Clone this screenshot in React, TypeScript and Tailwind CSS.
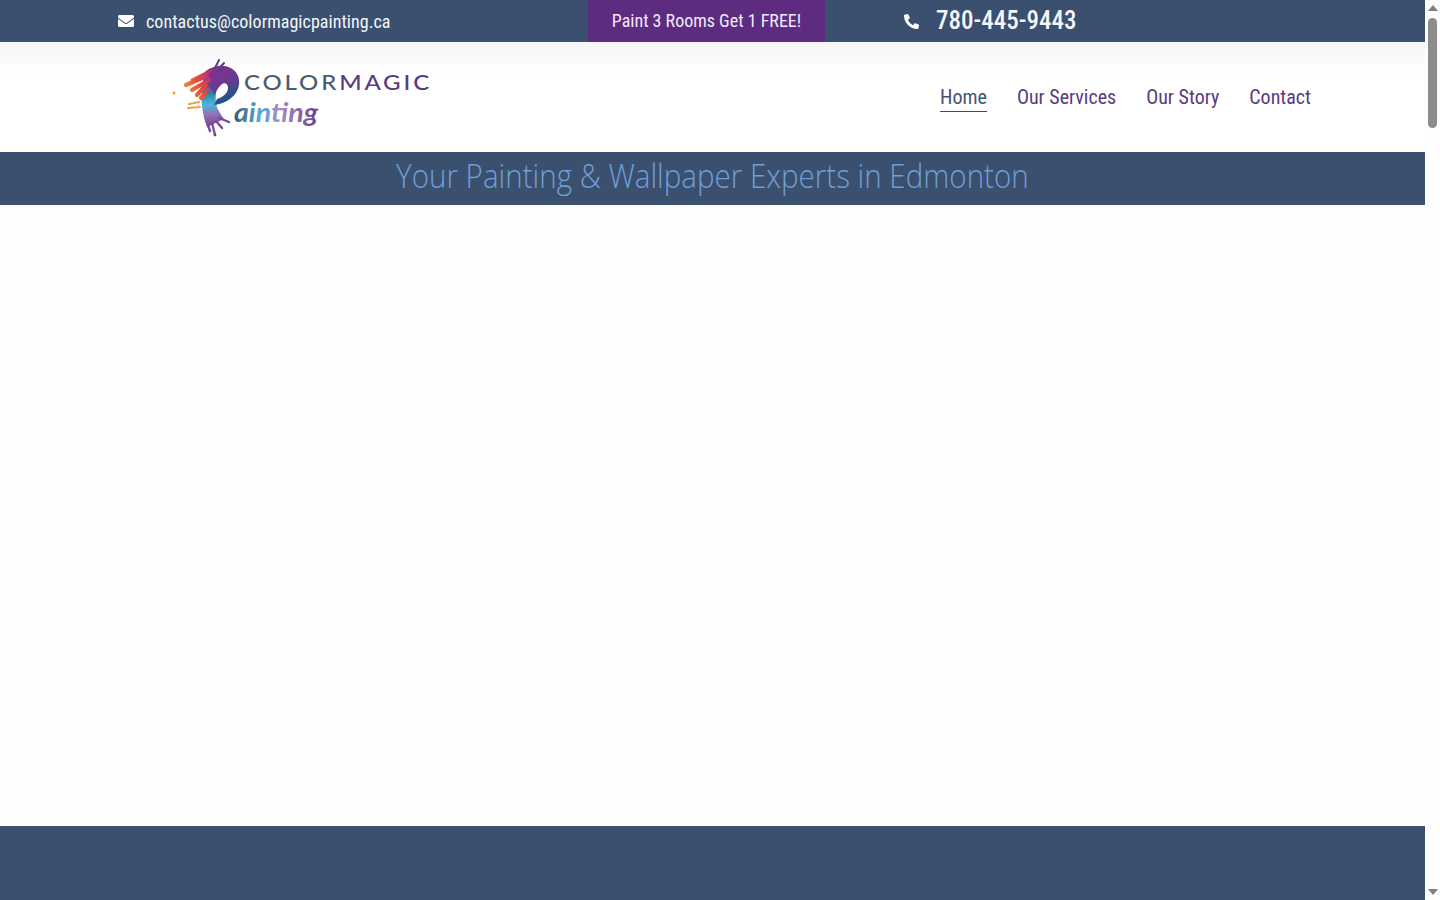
import { FaEnvelope, FaPhoneAlt } from "react-icons/fa";

function Logo() {
  return (
    <svg width="262" height="84" viewBox="170 55 262 84" className="block">
      <defs>
        <linearGradient id="bowl" gradientUnits="userSpaceOnUse" x1="208" y1="68" x2="226" y2="105">
          <stop offset="0" stopColor="#8a2f90" />
          <stop offset="0.5" stopColor="#6a3a90" />
          <stop offset="1" stopColor="#0f5a86" />
        </linearGradient>
        <linearGradient id="stem" gradientUnits="userSpaceOnUse" x1="208" y1="76" x2="212" y2="128">
          <stop offset="0" stopColor="#54408f" />
          <stop offset="0.3" stopColor="#1f7fa8" />
          <stop offset="0.55" stopColor="#4fb3da" />
          <stop offset="0.75" stopColor="#9570b0" />
          <stop offset="1" stopColor="#6b3f8e" />
        </linearGradient>
        <linearGradient id="streak" gradientUnits="userSpaceOnUse" x1="178" y1="90" x2="212" y2="74">
          <stop offset="0" stopColor="#f5a623" />
          <stop offset="0.55" stopColor="#e8503a" />
          <stop offset="1" stopColor="#b52a82" />
        </linearGradient>
        <linearGradient id="word" gradientUnits="userSpaceOnUse" x1="234" y1="0" x2="318" y2="0">
          <stop offset="0" stopColor="#3f5676" />
          <stop offset="0.3" stopColor="#55a9d3" />
          <stop offset="0.55" stopColor="#a98bc4" />
          <stop offset="1" stopColor="#69408f" />
        </linearGradient>
      </defs>
      {/* brush P */}
      <path d="M205 74 L219 78 C216 86 215 96 216 103 C217 110 221 114 224 119 L207 127 C202 114 201 100 202 92 C202 86 203 79 205 74 Z" fill="url(#stem)" />
      <path d="M205 72 C214 63 233 63 238 76 C243 89 232 103 214 105 L217 99 C223 97 228 93 228 88 C228 83 224 82 221 85 C218 88 216 91 215 95 L208 84 Z" fill="url(#bowl)" />
      <path d="M208 125 L210 131 M212 123 L215 135 M216 121 L222 128 M219 118 L229 122" stroke="#7a4a9c" strokeWidth="2.4" strokeLinecap="round" />
      <circle cx="215" cy="135" r="1.3" fill="#6b3f8e" />
      <path d="M207 76 L186 85 M209 80 L192 90 M206 85 L197 95 M208 90 L201 98" stroke="url(#streak)" strokeWidth="4.2" strokeLinecap="round" />
      <path d="M210 71 L192 80" stroke="url(#streak)" strokeWidth="3" strokeLinecap="round" />
      <circle cx="174" cy="93" r="1.5" fill="#f5a623" />
      <path d="M189 104 L199 102 M188 108 L200 107" stroke="#eda24a" strokeWidth="2.2" strokeLinecap="round" />
      <path d="M214 70 L219 60 M217 71 L224 63 M220 71 L224 67" stroke="#5d3a84" strokeWidth="2" strokeLinecap="round" />
      {/* wordmark */}
      <text x="244" y="90" textLength="188" lengthAdjust="spacingAndGlyphs" letterSpacing="2.5" fontFamily="Lato, sans-serif" fontSize="21" fontWeight="500">
        <tspan fill="#4b5c72">COLOR</tspan>
        <tspan fill="#5b3b80">MAGIC</tspan>
      </text>
      <text x="234" y="122" textLength="84" lengthAdjust="spacingAndGlyphs" fontFamily="Lato, sans-serif" fontStyle="italic" fontWeight="700" fontSize="26" fill="url(#word)">
        ainting
      </text>
    </svg>
  );
}

function Scrollbar() {
  return (
    <aside className="w-[15px] h-screen flex flex-col items-center bg-[#fdfdfd] shrink-0">
      <div className="mt-[5px] w-0 h-0 border-x-[5px] border-x-transparent border-b-[6px] border-b-[#7f7f7f]" />
      <div className="mt-[7px] w-[9px] h-[110px] rounded-full bg-[#8c8c8c]" />
      <div className="mt-auto mb-[5px] w-0 h-0 border-x-[5px] border-x-transparent border-t-[6px] border-t-[#7f7f7f]" />
    </aside>
  );
}

export default function App() {
  const condensed = "font-['Roboto'] [font-stretch:75%]";
  return (
    <div className="flex h-screen overflow-hidden bg-[#fdfdfd] font-['Roboto',sans-serif]">
      <main className="flex-1 flex flex-col min-w-0">
        <div className="h-[42px] bg-[#3b4f6f] flex items-center text-[#f4f6fa] shrink-0">
          <div className="w-[588px] pl-[118px] flex items-center">
            <FaEnvelope className="w-4 h-4 text-white" />
            <span className={`${condensed} ml-3 text-[18px] tracking-[0.05px]`}>contactus@colormagicpainting.ca</span>
          </div>
          <div className={`${condensed} w-[237px] h-full bg-[#5d2c80] flex items-center justify-center text-[18px] text-[#f3e9f8] pb-[2px]`}>
            Paint 3 Rooms Get 1 FREE!
          </div>
          <div className="pl-[79px] flex items-center">
            <FaPhoneAlt className="w-[15px] h-[15px] text-white" />
            <span className={`${condensed} ml-[17px] text-[25px] font-medium`}>780-445-9443</span>
          </div>
        </div>

        <header className="h-[110px] shrink-0 flex items-center justify-between pl-[170px] pr-[114px] bg-gradient-to-b from-[#f6f6f6] via-white via-30% to-white">
          <Logo />
          <nav className={`${condensed} flex gap-[30px] text-[20px] text-[#5b3a7e]`}>
            <a className="text-[#43546f] border-b border-[#5b3a7e] leading-[28px]">Home</a>
            <a className="leading-[28px]">Our Services</a>
            <a className="leading-[28px]">Our Story</a>
            <a className="leading-[28px]">Contact</a>
          </nav>
        </header>

        <div className="h-[53px] shrink-0 bg-[#3b4f6f] flex items-center justify-center">
          <h1 className="font-['Open_Sans',sans-serif] font-light text-[33px] leading-[48px] pb-[5px] scale-x-[0.895] text-[#6f9fd6]">
            Your Painting &amp; Wallpaper Experts in Edmonton
          </h1>
        </div>

        <div className="h-[265px] shrink-0 bg-[#fdfdfd]" />
        <div className="flex-1 bg-[#fefefe]" />
        <footer className="h-[74px] shrink-0 bg-[#3b4f6f]" />
      </main>
      <Scrollbar />
    </div>
  );
}
